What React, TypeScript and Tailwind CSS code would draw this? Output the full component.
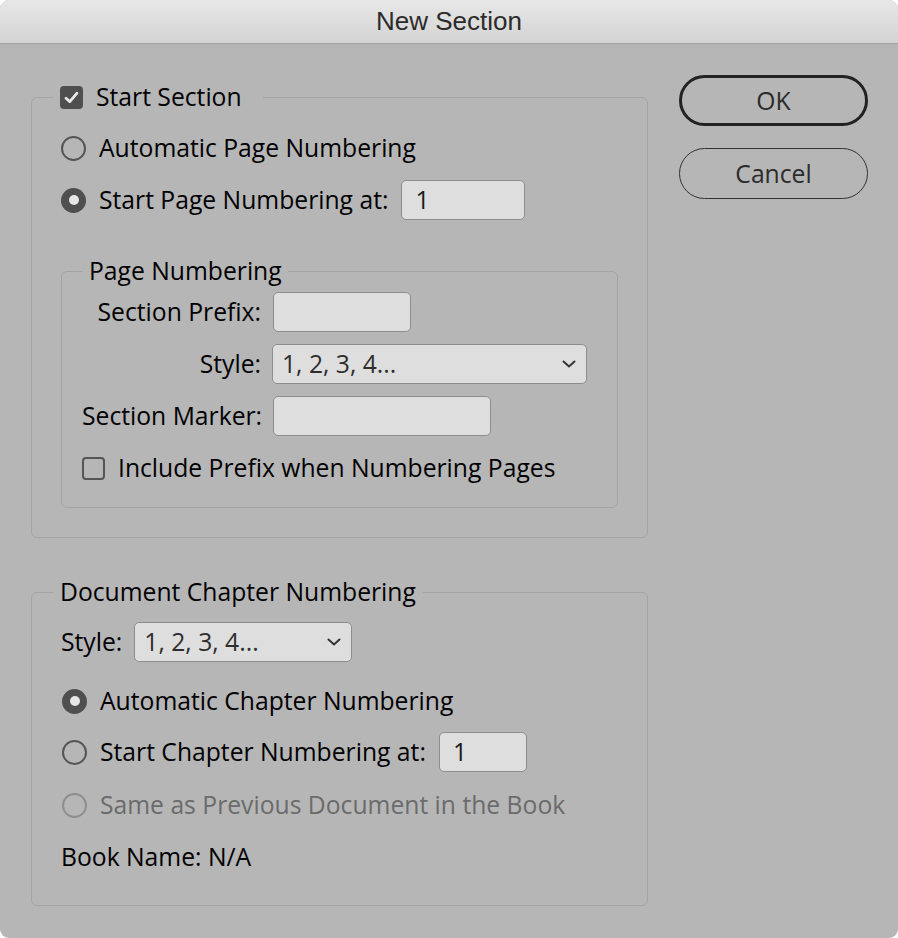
import type { ReactNode } from 'react';

const FONT = "font-['Open_Sans',sans-serif]";

function Radio({ checked = false, disabled = false }: { checked?: boolean; disabled?: boolean }) {
  if (checked) {
    return (
      <span className="flex h-[25px] w-[25px] shrink-0 items-center justify-center rounded-full bg-[#4f4f4f]">
        <span className="h-[10px] w-[10px] rounded-full bg-[#e6e6e6]" />
      </span>
    );
  }
  return (
    <span
      className={
        disabled
          ? 'h-[25px] w-[25px] shrink-0 rounded-full border-2 border-[#8e8e8e]'
          : 'h-[25px] w-[25px] shrink-0 rounded-full border-2 border-[#555555]'
      }
    />
  );
}

function Checkbox({ checked = false }: { checked?: boolean }) {
  if (checked) {
    return (
      <span className="flex h-[23px] w-[23px] shrink-0 items-center justify-center rounded-[4px] bg-[#4f4f4f]">
        <svg width="15" height="13" viewBox="0 0 15 13" fill="none">
          <path
            d="M2 7.2 L5.8 10.6 L13 2.2"
            stroke="#e8e8e8"
            strokeWidth="2.8"
            strokeLinecap="round"
            strokeLinejoin="round"
          />
        </svg>
      </span>
    );
  }
  return <span className="h-[23px] w-[23px] shrink-0 rounded-[4px] border-2 border-[#555555]" />;
}

function TextField({ width, value = '' }: { width: string; value?: string }) {
  return (
    <div
      className={`flex h-10 items-center rounded-[5px] border-[1.5px] border-[#8d8d8d] bg-[#dedede] px-[13px] text-[#1a1a1a] ${width}`}
    >
      {value}
    </div>
  );
}

function Select({ width, value }: { width: string; value: string }) {
  return (
    <div
      className={`flex h-10 items-center justify-between rounded-[5px] border-[1.5px] border-[#8d8d8d] bg-[#dedede] pl-[9px] pr-[10px] text-[#2e2e2e] ${width}`}
    >
      <span>{value}</span>
      <svg width="14" height="8" viewBox="0 0 14 8" fill="none">
        <path d="M1.5 1.5 L7 6.5 L12.5 1.5" stroke="#333333" strokeWidth="2" strokeLinecap="round" />
      </svg>
    </div>
  );
}

// legend sits inside the fieldset's left padding, hence the negative margin
function Group({ legend, className, children }: { legend: ReactNode; className: string; children: ReactNode }) {
  return (
    <fieldset className={`rounded-[6px] border border-[#a4a4a4] ${className}`}>
      <legend className="-ml-[8px] px-[7px] leading-[28px]">{legend}</legend>
      {children}
    </fieldset>
  );
}

export default function App() {
  return (
    <div className={`min-h-[938px] w-[898px] bg-white ${FONT} text-[24.7px] text-black`}>
      <div className="h-[938px] w-[898px] overflow-hidden rounded-[9px] bg-[#b6b6b6]">
        <div className="flex h-[44px] items-center justify-center border-b border-[#a2a2a2] bg-gradient-to-b from-[#e8e8e8] to-[#d3d3d3] font-['Liberation_Sans',Arial,sans-serif] text-[26px] text-[#2b2b2b]">
          New Section
        </div>

        <div className="flex items-start pl-[31px] pt-[31px]">
          <div className="flex w-[617px] flex-col gap-[40px] pt-[8px]">
            <Group
              className="px-[29px] pb-[29px]"
              legend={
                <span className="flex items-center gap-[13px] pr-[14px]">
                  <Checkbox checked />
                  Start Section
                </span>
              }
            >
              <div className="flex flex-col pt-[17px]">
                <div className="flex h-10 items-center gap-[13px]">
                  <Radio />
                  Automatic Page Numbering
                </div>
                <div className="mt-[12px] flex h-10 items-center gap-[13px]">
                  <Radio checked />
                  Start Page Numbering at:
                  <TextField width="w-[124px]" value="1" />
                </div>

                <fieldset className="mt-[37px] rounded-[6px] border border-[#a4a4a4] pb-[19px] pl-[20px] pr-[20px]">
                  <legend className="ml-[1px] px-[6px] leading-[28px]">Page Numbering</legend>
                  <div className="grid grid-cols-[179px_1fr] items-center gap-x-3 gap-y-[12px] pt-[7px]">
                    <span className="whitespace-nowrap text-right">Section Prefix:</span>
                    <TextField width="w-[138px]" />
                    <span className="text-right">Style:</span>
                    <Select width="w-[315px] -ml-px" value="1, 2, 3, 4..." />
                    <span className="whitespace-nowrap text-right">Section Marker:</span>
                    <TextField width="w-[218px]" />
                  </div>
                  <div className="mt-[12px] flex h-10 items-center gap-[13px]">
                    <Checkbox />
                    Include Prefix when Numbering Pages
                  </div>
                </fieldset>
              </div>
            </Group>

            <Group className="px-[29px] pb-[28px]" legend="Document Chapter Numbering">
              <div className="flex flex-col pt-[16px]">
                <div className="flex h-10 items-center gap-3">
                  Style:
                  <Select width="w-[218px]" value="1, 2, 3, 4..." />
                </div>
                <div className="mt-[19px] flex h-10 items-center gap-[13px] pl-[1px]">
                  <Radio checked />
                  Automatic Chapter Numbering
                </div>
                <div className="mt-[11px] flex h-10 items-center gap-[13px] pl-[1px]">
                  <Radio />
                  Start Chapter Numbering at:
                  <TextField width="w-[88px]" value="1" />
                </div>
                <div className="mt-[13px] flex h-10 items-center gap-[13px] pl-[1px] text-[#6b6b6b]">
                  <Radio disabled />
                  Same as Previous Document in the Book
                </div>
                <div className="mt-[12px] flex h-10 items-center">Book Name: N/A</div>
              </div>
            </Group>
          </div>

          <div className="ml-[31px] flex w-[189px] flex-col gap-[22px]">
            <button
              type="button"
              className="h-[51px] rounded-full border-[3px] border-[#222222] text-[#2b2b2b]"
            >
              OK
            </button>
            <button
              type="button"
              className="h-[51px] rounded-full border-[1.5px] border-[#333333] text-[#2b2b2b]"
            >
              Cancel
            </button>
          </div>
        </div>
      </div>
    </div>
  );
}
